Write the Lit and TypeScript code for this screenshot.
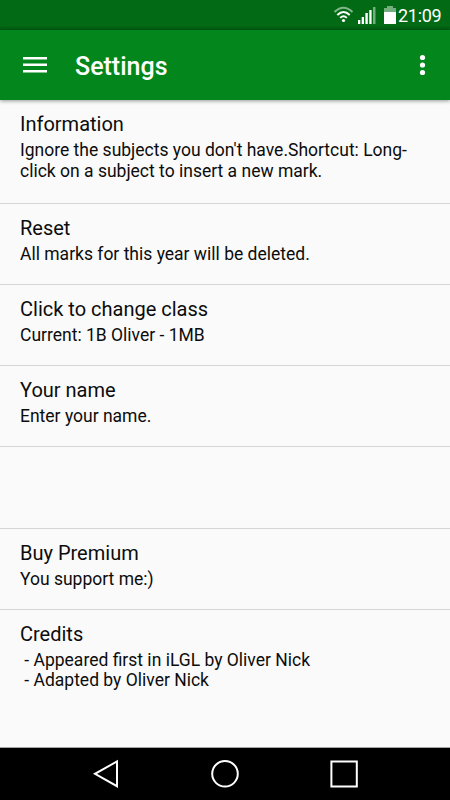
import { LitElement, html, css, svg } from "lit";
import { customElement } from "lit/decorators.js";

interface Entry { title: string; lines: string[]; size: string; }

const ENTRIES: Entry[] = [
  { title: "Information", lines: ["Ignore the subjects you don't have.Shortcut: Long-", "click on a subject to insert a new mark."], size: "first" },
  { title: "Reset", lines: ["All marks for this year will be deleted."], size: "" },
  { title: "Click to change class", lines: ["Current: 1B Oliver - 1MB"], size: "" },
  { title: "Your name", lines: ["Enter your name."], size: "" },
  { title: "", lines: [], size: "" },
  { title: "Buy Premium", lines: ["You support me:)"], size: "" },
  { title: "Credits", lines: [" - Appeared first in iLGL by Oliver Nick", " - Adapted by Oliver Nick"], size: "last" },
];

@customElement("app-root")
export class AppRoot extends LitElement {
  static styles = css`
    :host { display: flex; flex-direction: column; width: 450px; height: 800px; overflow: hidden;
      background: #fafafa; color: #0c0c0c; font-family: Roboto, sans-serif; }
    svg { display: block; flex: none; }
    .status { flex: none; height: 30px; display: flex; align-items: center; justify-content: flex-end; color: #fff;
      background: linear-gradient(#026a15 0 25px, #025c12 30px); }
    .clock { font-size: 18px; line-height: 34px; width: 43px; margin-right: 9px; white-space: nowrap; letter-spacing: -.3px; height: 32px; }
    .bar { flex: none; height: 70px; display: flex; align-items: center; background: #03871d; color: #fff;
      box-shadow: 0 1px 4px rgba(0,0,0,.4); z-index: 1; }
    .heading { flex: 1; margin: 4px 0 0 28px; font-size: 25px; font-weight: 500; line-height: 30px; }
    .menu { margin-left: 23px; }
    .more { margin-right: 22px; }
    .list { flex: 1; min-height: 0; }
    .row { box-sizing: border-box; height: 81.2px; padding: 12px 20px 0; border-bottom: 1px solid #d5d5d5; }
    .first { height: 103.85px; }
    .last { border: 0; height: 137px; }
    .title { font-size: 20px; line-height: 24px; }
    .text { font-size: 17.5px; line-height: 20.5px; white-space: pre; }
    .title + .text { margin-top: 4px; }
    .nav { flex: none; height: 52px; background: #000; border-top: 1px solid #a5a5a5; }
  `;

  render() {
    return html`
      <div class="status">
        <svg width="64" height="30" viewBox="334 0 64 30" fill="#fff">
          <g fill="none" stroke="#fff" stroke-width="2">
            <path d="M334.500 12Q343.500 3.500 352.500 12" opacity=".5"/>
            <path d="M337.300 15Q343.500 9 349.700 15M340.200 17.900Q343.500 14.700 346.800 17.900"/>
          </g>
          <circle cx="343.500" cy="20.500" r="1.600"/>
          <path d="M358 20h2.300v4H358zM361.700 17h2.300v7h-2.300zM365.400 13h2.400v11h-2.400zM369.300 10h2.300v14h-2.300z"/>
          <path d="M373 7h2.500v17H373zM387 6h6v2h3v4h-12V8h3z" opacity=".45"/>
          <path d="M384 12h12v12h-12z"/>
        </svg>
        <span class="clock">21:09</span>
      </div>
      <header class="bar">
        <svg class="menu" width="24" height="18" viewBox="0 0 24 18"><path fill="#fff" d="M0 1h24v2.400H0zM0 7.600h24V10H0zM0 14.100h24v2.400H0z"/></svg>
        <div class="heading">Settings</div>
        <svg class="more" width="11" height="24" viewBox="0 0 11 24" fill="#fff">${[4.5, 12, 19.5].map((y) => svg`<circle cx="5.500" cy=${y} r="2.600"/>`)}</svg>
      </header>
      <main class="list">
        ${ENTRIES.map((e) => html`<section class="row ${e.size}"><div class="title">${e.title}</div>${e.lines.map((l) => html`<div class="text">${l}</div>`)}</section>`)}
      </main>
      <nav class="nav">
        <svg width="450" height="52" viewBox="0 748 450 52" fill="none" stroke="#fff" stroke-width="2">
          <path d="M117 761.500V786.200L95 773.800Z"/><circle cx="225" cy="773.800" r="12.800"/><path d="M331.400 761.400h25.400v25.200h-25.400z"/>
        </svg>
      </nav>`;
  }
}
